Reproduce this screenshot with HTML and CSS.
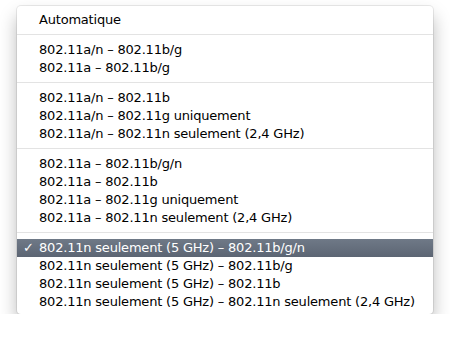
FILE: index.html
```html
<!DOCTYPE html>
<html lang="fr">
<head>
<meta charset="utf-8">
<link rel="stylesheet" href="styles.css">
</head>
<body>
<div class="menu">
  <div class="item">Automatique</div>
  <div class="sep"></div>
  <div class="item">802.11a/n – 802.11b/g</div>
  <div class="item">802.11a – 802.11b/g</div>
  <div class="sep"></div>
  <div class="item">802.11a/n – 802.11b</div>
  <div class="item">802.11a/n – 802.11g uniquement</div>
  <div class="item">802.11a/n – 802.11n seulement (2,4 GHz)</div>
  <div class="sep"></div>
  <div class="item">802.11a – 802.11b/g/n</div>
  <div class="item">802.11a – 802.11b</div>
  <div class="item">802.11a – 802.11g uniquement</div>
  <div class="item">802.11a – 802.11n seulement (2,4 GHz)</div>
  <div class="sep"></div>
  <div class="item selected"><span class="check">✓</span>802.11n seulement (5 GHz) – 802.11b/g/n</div>
  <div class="item">802.11n seulement (5 GHz) – 802.11b/g</div>
  <div class="item">802.11n seulement (5 GHz) – 802.11b</div>
  <div class="item">802.11n seulement (5 GHz) – 802.11n seulement (2,4 GHz)</div>
</div>
</body>
</html>
```
FILE: styles.css
```css
html, body {
  margin: 0;
  padding: 0;
  background: #ffffff;
}
body {
  padding: 6px 17px 0 17px;
  width: 416px;
}
.menu {
  width: 416px;
  box-sizing: border-box;
  background: #ffffff;
  border-radius: 4px;
  padding: 5px 0 3px 0;
  box-shadow: 0 0 0 1px rgba(0,0,0,0.08), 0 10px 18px rgba(0,0,0,0.28);
  font-family: "DejaVu Sans", sans-serif;
  font-size: 13px;
  letter-spacing: -0.2px;
  color: #000;
}
.item {
  position: relative;
  height: 18px;
  line-height: 18px;
  padding-left: 22px;
  white-space: nowrap;
}
.sep {
  height: 1px;
  background: #e3e3e3;
  margin: 5px 0 6px 0;
}
.selected {
  background: linear-gradient(#6f7987, #5c6573);
  color: #fff;
}
.check {
  position: absolute;
  left: 6px;
  top: 0;
}
```
